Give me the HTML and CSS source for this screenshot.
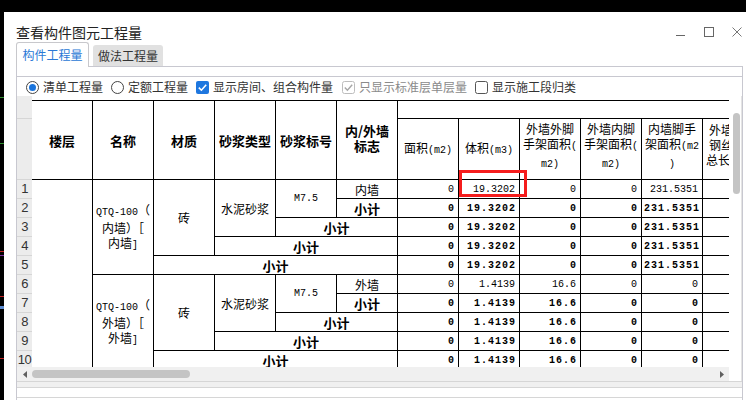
FILE: index.html
```html
<!DOCTYPE html>
<html>
<head>
<meta charset="utf-8">
<link rel="stylesheet" href="styles.css">
</head>
<body>
<div class="desk">
  <div class="strip"></div>
  <div class="dialog">
    <div class="titlebar">
      <span class="title">查看构件图元工程量</span>
      <div class="winctl">
        <svg width="10" height="10" viewBox="0 0 10 10"><path d="M0 8.5H9" stroke="#666" stroke-width="1"/></svg>
        <svg width="10" height="10" viewBox="0 0 10 10"><rect x="0.5" y="0.5" width="9" height="9" fill="none" stroke="#666"/></svg>
        <svg width="10" height="10" viewBox="0 0 10 10"><path d="M0.5 0.5L9.5 9.5M9.5 0.5L0.5 9.5" stroke="#777" stroke-width="1"/></svg>
      </div>
    </div>
    <div class="tabs">
      <div class="tab active">构件工程量</div>
      <div class="tab">做法工程量</div>
    </div>
    <div class="panel">
      <div class="options">
        <label class="opt">
          <svg width="13" height="13" viewBox="0 0 13 13"><circle cx="6.5" cy="6.5" r="6" fill="#fff" stroke="#444"/><circle cx="6.5" cy="6.5" r="3.5" fill="#1a74dc"/></svg>
          <span>清单工程量</span>
        </label>
        <label class="opt">
          <svg width="13" height="13" viewBox="0 0 13 13"><circle cx="6.5" cy="6.5" r="6" fill="#fff" stroke="#444"/></svg>
          <span>定额工程量</span>
        </label>
        <label class="opt">
          <svg width="13" height="13" viewBox="0 0 13 13"><rect x="0" y="0" width="13" height="13" rx="2" fill="#1e77df"/><path d="M2.8 6.6L5.4 9.2L10.2 3.8" fill="none" stroke="#fff" stroke-width="1.6"/></svg>
          <span>显示房间、组合构件量</span>
        </label>
        <label class="opt dis">
          <svg width="13" height="13" viewBox="0 0 13 13"><rect x="0.5" y="0.5" width="12" height="12" rx="2" fill="#fff" stroke="#bdbdbd"/><path d="M2.8 6.6L5.4 9.2L10.2 3.8" fill="none" stroke="#a6a6a6" stroke-width="1.4"/></svg>
          <span>只显示标准层单层量</span>
        </label>
        <label class="opt">
          <svg width="13" height="13" viewBox="0 0 13 13"><rect x="0.5" y="0.5" width="12" height="12" rx="2" fill="#fff" stroke="#555"/></svg>
          <span>显示施工段归类</span>
        </label>
      </div>
      <div class="grid">
        <div class="gridmain">
          <div class="gridbody">
            <div class="rowhdr">
              <div class="rh rh-top"></div>
              <div class="rh rh-head"></div>
              <div class="rh">1</div>
              <div class="rh">2</div>
              <div class="rh">3</div>
              <div class="rh">4</div>
              <div class="rh">5</div>
              <div class="rh">6</div>
              <div class="rh">7</div>
              <div class="rh">8</div>
              <div class="rh">9</div>
              <div class="rh">10</div>
            </div>
            <div class="tablewrap">
              <table class="qty">
                <colgroup>
                  <col class="c"><col class="c"><col class="c"><col class="c"><col class="c"><col class="c">
                  <col class="c"><col class="c"><col class="c"><col class="c"><col class="c"><col class="c">
                </colgroup>
                <thead>
                  <tr class="h1">
                    <th rowspan="2">楼层</th>
                    <th rowspan="2">名称</th>
                    <th rowspan="2">材质</th>
                    <th rowspan="2">砂浆类型</th>
                    <th rowspan="2">砂浆标号</th>
                    <th rowspan="2" class="two">内/外墙<br>标志</th>
                    <th colspan="6"></th>
                  </tr>
                  <tr class="h2">
                    <th class="sub">面积<span class="a">(m2)</span></th>
                    <th class="sub">体积<span class="a">(m3)</span></th>
                    <th class="sub ml">外墙外脚手架面积<span class="a">(m2)</span></th>
                    <th class="sub ml">外墙内脚手架面积<span class="a">(m2)</span></th>
                    <th class="sub ml">内墙脚手架面积<span class="a">(m2)</span></th>
                    <th class="sub ml">外墙外侧钢丝网片总长度<span class="a">(m)</span></th>
                  </tr>
                </thead>
                <tbody>
                  <tr>
                    <td rowspan="10"></td>
                    <td rowspan="5" class="nm"><span class="a">QTQ-100</span>（<br>内墙）［<br>内墙<span class="a">]</span></td>
                    <td rowspan="4">砖</td>
                    <td rowspan="3">水泥砂浆</td>
                    <td rowspan="2" class="a">M7.5</td>
                    <td>内墙</td>
                    <td class="n">0</td><td class="n">19.3202</td><td class="n">0</td><td class="n">0</td><td class="n">231.5351</td><td></td>
                  </tr>
                  <tr class="b">
                    <td class="s">小计</td>
                    <td class="n">0</td><td class="n">19.3202</td><td class="n">0</td><td class="n">0</td><td class="n">231.5351</td><td></td>
                  </tr>
                  <tr class="b">
                    <td class="s" colspan="2">小计</td>
                    <td class="n">0</td><td class="n">19.3202</td><td class="n">0</td><td class="n">0</td><td class="n">231.5351</td><td></td>
                  </tr>
                  <tr class="b">
                    <td class="s" colspan="3">小计</td>
                    <td class="n">0</td><td class="n">19.3202</td><td class="n">0</td><td class="n">0</td><td class="n">231.5351</td><td></td>
                  </tr>
                  <tr class="b">
                    <td class="s" colspan="4">小计</td>
                    <td class="n">0</td><td class="n">19.3202</td><td class="n">0</td><td class="n">0</td><td class="n">231.5351</td><td></td>
                  </tr>
                  <tr>
                    <td rowspan="5" class="nm"><span class="a">QTQ-100</span>（<br>外墙）［<br>外墙<span class="a">]</span></td>
                    <td rowspan="4">砖</td>
                    <td rowspan="3">水泥砂浆</td>
                    <td rowspan="2" class="a">M7.5</td>
                    <td>外墙</td>
                    <td class="n">0</td><td class="n">1.4139</td><td class="n">16.6</td><td class="n">0</td><td class="n">0</td><td></td>
                  </tr>
                  <tr class="b">
                    <td class="s">小计</td>
                    <td class="n">0</td><td class="n">1.4139</td><td class="n">16.6</td><td class="n">0</td><td class="n">0</td><td></td>
                  </tr>
                  <tr class="b">
                    <td class="s" colspan="2">小计</td>
                    <td class="n">0</td><td class="n">1.4139</td><td class="n">16.6</td><td class="n">0</td><td class="n">0</td><td></td>
                  </tr>
                  <tr class="b">
                    <td class="s" colspan="3">小计</td>
                    <td class="n">0</td><td class="n">1.4139</td><td class="n">16.6</td><td class="n">0</td><td class="n">0</td><td></td>
                  </tr>
                  <tr class="b">
                    <td class="s" colspan="4">小计</td>
                    <td class="n">0</td><td class="n">1.4139</td><td class="n">16.6</td><td class="n">0</td><td class="n">0</td><td></td>
                  </tr>
                </tbody>
              </table>
              <div class="mark"></div>
            </div>
          </div>
          <div class="hscroll">
            <svg class="arr" width="4" height="7" viewBox="0 0 4 7"><path d="M4 0V7L0 3.5Z" fill="#606060"/></svg>
            <div class="hthumb"></div>
            <svg class="arr right" width="4" height="7" viewBox="0 0 4 7"><path d="M0 0V7L4 3.5Z" fill="#606060"/></svg>
          </div>
        </div>
        <div class="vscroll"><div class="vthumb"></div></div>
      </div>
      <div class="foot1"></div>
      <div class="foot2"></div>
    </div>
  </div>
</div>
</body>
</html>
```
FILE: styles.css
```css
* { box-sizing: border-box; }
html, body { margin: 0; padding: 0; }
body {
  width: 746px;
  height: 400px;
  overflow: hidden;
  background: #000;
  font-family: "Noto Sans CJK SC", "Microsoft YaHei", sans-serif;
  color: #222;
}
.desk {
  display: flex;
  height: 400px;
  padding-top: 12px;
}
.strip {
  width: 4px;
  background: linear-gradient(to bottom,
    #000 0, #000 85px, #2f8f2f 85px, #2f8f2f 86px, #000 86px,
    #000 131px, #2f8f2f 131px, #2f8f2f 132px, #000 132px,
    #000 239px, #c02020 239px, #c02020 240px, #000 240px,
    #000 243px, #7a30a0 243px, #7a30a0 244px, #000 244px,
    #000 284px, #c02020 284px, #c02020 285px, #000 285px,
    #000 294px, #5a8ad0 294px, #5a8ad0 297px, #000 297px,
    #000 346px, #c02020 346px, #c02020 347px, #000 347px);
}
.dialog {
  flex: 1;
  background: #fff;
  display: flex;
  flex-direction: column;
}
.titlebar {
  height: 30px;
  display: flex;
  align-items: center;
  padding: 10px 4px 0 12px;
}
.title {
  font-size: 14px;
  line-height: 20px;
  color: #222;
}
.winctl {
  margin-left: auto;
  display: flex;
  gap: 18px;
  align-items: center;
}
.winctl svg { display: block; }
.tabs {
  display: flex;
  align-items: flex-end;
  height: 25px;
  padding-left: 12px;
  margin-bottom: -1px;
  position: relative;
  z-index: 1;
}
.tab {
  font-size: 12px;
  line-height: 18px;
  text-align: center;
}
.tab.active {
  width: 73px;
  height: 25px;
  background: #fff;
  border: 1px solid #c8c8cc;
  border-bottom: none;
  border-radius: 3px 3px 0 0;
  color: #2a78d6;
  padding-top: 3px;
}
.tab:not(.active) {
  width: 70px;
  height: 21px;
  margin-left: 4px;
  margin-bottom: 1px;
  background: #e1e1e1;
  border-radius: 3px 3px 0 0;
  color: #333;
  padding-top: 2px;
}
.panel {
  flex: 1;
  margin: 0 3px 0 12px;
  border: 1px solid #c8c8d0;
  border-bottom: none;
  padding-top: 9px;
  display: flex;
  flex-direction: column;
}
.options {
  border-top: 1px solid #c8c8d0;
  height: 20px;
  display: flex;
  align-items: center;
  padding-left: 9px;
  padding-top: 1px;
  gap: 8px;
}
.opt {
  display: flex;
  align-items: center;
  gap: 4px;
  font-size: 12px;
  line-height: 16px;
  color: #333;
}
.opt svg { display: block; }
.opt.dis { color: #8a8a8a; margin-left: 1px; }
.grid {
  display: flex;
  height: 285px;
}
.gridmain {
  width: 712px;
  display: flex;
  flex-direction: column;
}
.gridbody {
  display: flex;
  height: 271px;
  overflow: hidden;
}
.rowhdr {
  width: 15px;
  background: #ececec;
  display: flex;
  flex-direction: column;
}
.rh {
  height: 19px;
  flex: none;
  border-bottom: 1px solid #d6d6d6;
  font-family: "Liberation Sans", Arial, sans-serif;
  font-size: 13px;
  line-height: 18px;
  text-align: center;
  color: #333;
  letter-spacing: -0.5px;
}
.rh-top { height: 23px; }
.rh-head { height: 61px; }
.tablewrap {
  width: 697px;
  padding-top: 4px;
  overflow: hidden;
  position: relative;
}
.qty {
  border-collapse: separate;
  border-spacing: 0;
  table-layout: fixed;
  width: 732px;
  border-top: 1px solid #000;
}
.qty col.c { width: 61px; }
.qty th, .qty td {
  border-right: 1px solid #000;
  border-bottom: 1px solid #000;
  padding: 0 2px;
  text-align: center;
  vertical-align: middle;
  overflow: hidden;
  color: #000;
  line-height: 15px;
}
.qty th {
  font-size: 13px;
  font-weight: bold;
}
.qty th.two { padding-bottom: 4px; }
.qty th.sub {
  font-size: 12px;
  font-weight: normal;
  word-break: break-all;
  line-break: anywhere;
}
.qty th.ml { padding-bottom: 6px; }
.qty tr.h1 { height: 18px; }
.qty tr.h2 { height: 61px; }
.qty tbody tr { height: 19px; }
.qty td {
  font-size: 12px;
  white-space: nowrap;
}
.qty .a {
  font-family: "Liberation Mono", "DejaVu Sans Mono", monospace;
  font-size: 10px;
}
.qty td.a { font-size: 10px; }
.qty td.nm { line-height: 15px; }
.qty td.s {
  font-size: 13px;
  font-weight: bold;
}
.qty td.n {
  text-align: right;
  padding-right: 4px;
  font-family: "Liberation Mono", "DejaVu Sans Mono", monospace;
  font-size: 10px;
}
.qty tr.b td.n {
  font-weight: bold;
  letter-spacing: 1px;
  padding-right: 3px;
}
.mark {
  position: absolute;
  left: 427px;
  top: 74px;
  width: 68px;
  height: 27px;
  border: 3px solid #f51c1c;
}
.hscroll {
  height: 14px;
  background: #f0f0f0;
  display: flex;
  align-items: center;
  padding: 0 5px 0 6px;
}
.arr { display: block; }
.arr.right { margin-left: auto; }
.hthumb {
  width: 158px;
  height: 8px;
  margin-left: 5px;
  border-radius: 4px;
  background: #c4c4c4;
}
.vscroll {
  width: 13px;
  padding-top: 17px;
  padding-left: 4px;
  background: #fff;
  border-right: 1px solid #e4e4e4;
}
.vthumb {
  width: 7px;
  height: 81px;
  border-radius: 4px;
  background: #c4c4c4;
}
.foot1 {
  height: 7px;
  background: #f0f0f0;
  border-top: 1px solid #d6d6d6;
  border-bottom: 1px solid #d6d6d6;
}
.foot2 {
  height: 10px;
  border-bottom: 1px solid #d6d6d6;
}
```
